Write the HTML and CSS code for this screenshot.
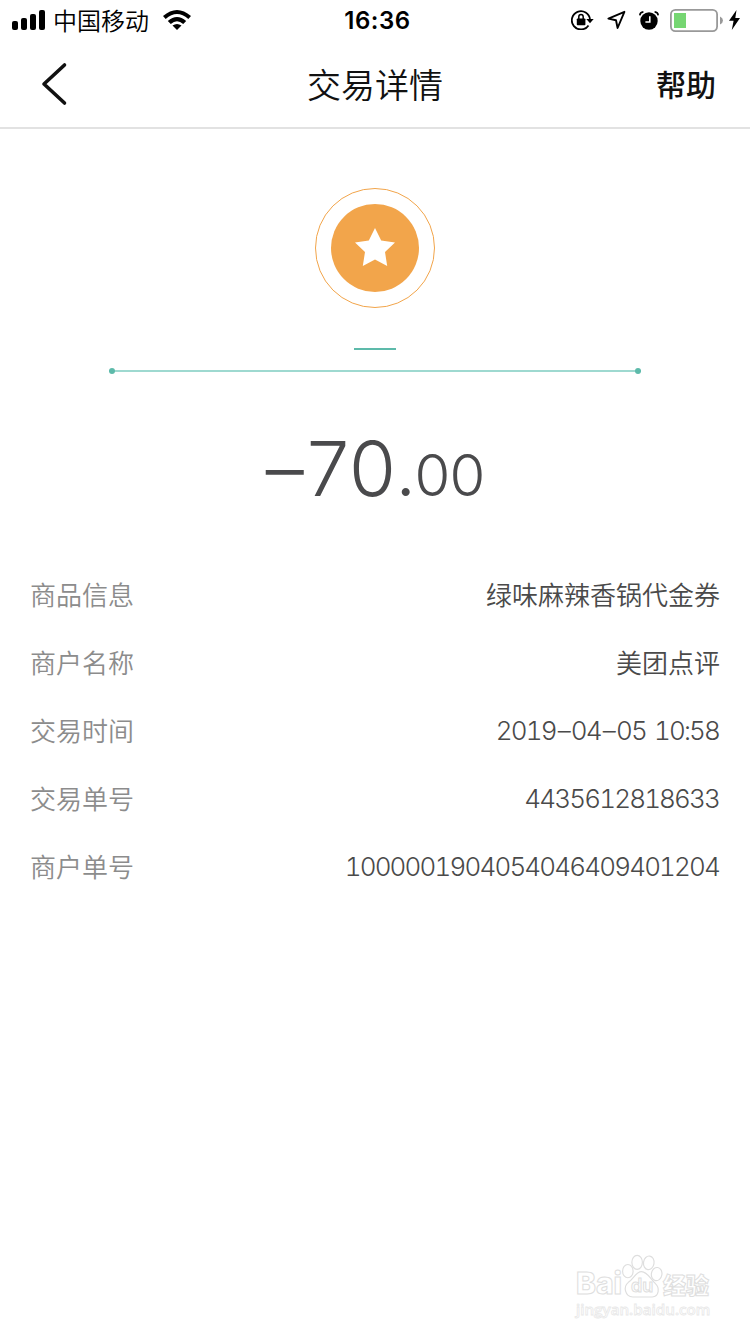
FILE: index.html
```html
<!DOCTYPE html>
<html lang="zh-CN">
  <head>
    <meta charset="utf-8" />
    <title>交易详情</title>
    <link rel="stylesheet" href="styles.css">
  </head>
  <body>
    <div class="status-bar">
      <div class="status-left">
        <svg class="signal" width="34" height="20" viewBox="0 0 34 20">
          <rect x="0" y="11" width="6" height="9" rx="2" />
          <rect x="9" y="8" width="6" height="12" rx="2" />
          <rect x="18" y="4" width="6" height="16" rx="2" />
          <rect x="27" y="0" width="6" height="20" rx="2" />
        </svg>
        <span class="carrier">中国移动</span>
        <svg class="wifi" width="28" height="20" viewBox="0 0 28 20">
          <path d="M0 6 Q14 -6 28 6 L25.3 9 Q14 -1 2.7 9 Z" />
          <path d="M4.8 11 Q14 3 23.2 11 L20.2 14 Q14 8.5 7.8 14 Z" />
          <path d="M9.5 15.6 Q14 12.2 18.5 15.6 L14 20 Z" />
        </svg>
      </div>
      <div class="time">16:36</div>
      <div class="status-right">
        <svg class="rotation-lock" width="23" height="20" viewBox="0 0 23 20">
          <path d="M17.5 15.4 A9.1 9.1 0 1 1 19 9.5" fill="none" stroke="#000" stroke-width="1.8" />
          <path d="M15.3 9 H22.7 L19 13.2 Z" />
          <rect x="5.8" y="8.4" width="8.6" height="6.8" rx="0.8" />
          <path d="M7.8 9 V6.8 A2.2 2.4 0 0 1 12.2 6.8 V9" fill="none" stroke="#000" stroke-width="1.5" />
        </svg>
        <svg class="location" width="19" height="20" viewBox="0 0 19 20">
          <path d="M17.4 1.8 L1.4 8.6 L9 10.2 L10.6 18 Z" fill="none" stroke="#000" stroke-width="1.9" stroke-linejoin="round" />
        </svg>
        <svg class="alarm" width="20" height="19" viewBox="0 0 20 19">
          <circle cx="10" cy="10" r="8.7" />
          <path d="M0.8 4.4 Q1 1.3 4.4 0.9 M19.2 4.4 Q19 1.3 15.6 0.9" fill="none" stroke="#000" stroke-width="1.6" />
          <path d="M10.8 5.2 V11 H6.4" fill="none" stroke="#fff" stroke-width="1.6" />
        </svg>
        <svg class="battery" width="53" height="23" viewBox="0 0 53 23">
          <rect x="0.9" y="0.9" width="46.2" height="21.2" rx="4.5" fill="none" stroke="#999" stroke-width="1.8" />
          <rect x="4" y="4" width="12" height="15" fill="#76d672" />
          <path d="M50 7.5 Q53 9 53 11.5 Q53 14 50 15.5 Z" fill="#999" />
        </svg>
        <svg class="bolt" width="11" height="20" viewBox="0 0 11 20">
          <path d="M7.5 0 L0 10.8 H4.6 L2.8 20 L11 8 H6.3 Z" />
        </svg>
      </div>
    </div>

    <div class="nav-bar">
      <svg class="back" width="28" height="44" viewBox="0 0 28 44">
        <path d="M24.5 3 L4 22 L24.5 41" fill="none" stroke="#111" stroke-width="3.6" stroke-linecap="round" stroke-linejoin="round" />
      </svg>
      <div class="title">交易详情</div>
      <div class="help">帮助</div>
    </div>

    <div class="summary">
      <div class="badge">
        <div class="badge-inner">
          <svg width="40" height="40" viewBox="0 0 40 40">
            <path d="M20 0 L26.2 12.5 L40 14.4 L30 24 L32.2 38 L20 31.4 L7.8 38 L10 24 L0 14.4 L13.8 12.5 Z" fill="#fff" />
          </svg>
        </div>
      </div>
      <div class="short-line"></div>
      <div class="long-line"></div>
      <div class="amount">
        <span class="minus">–</span><span class="yuan">70.</span><span class="cents">00</span>
      </div>
    </div>

    <div class="details">
      <div class="row">
        <span class="label">商品信息</span>
        <span class="value">绿味麻辣香锅代金券</span>
      </div>
      <div class="row">
        <span class="label">商户名称</span>
        <span class="value">美团点评</span>
      </div>
      <div class="row">
        <span class="label">交易时间</span>
        <span class="value number">2019<span class="dash">–</span>04<span class="dash">–</span>05 10:58</span>
      </div>
      <div class="row">
        <span class="label">交易单号</span>
        <span class="value number">4435612818633</span>
      </div>
      <div class="row">
        <span class="label">商户单号</span>
        <span class="value number">1000001904054046409401204</span>
      </div>
    </div>

    <div class="watermark">
      <div class="logo">
        <span class="logo-text">Bai</span>
        <div class="paw">
          <svg width="41" height="46" viewBox="0 0 42 46" fill="#fff" stroke="#dedede" stroke-width="1.2">
            <ellipse cx="6" cy="17" rx="5.4" ry="6.8" />
            <ellipse cx="15.5" cy="8" rx="5.4" ry="7.2" />
            <ellipse cx="27.5" cy="8.5" rx="5.4" ry="7" transform="rotate(8 27.5 8)" />
            <ellipse cx="35.5" cy="20" rx="5.4" ry="6.8" transform="rotate(10 35.5 20)" />
            <path d="M20 17.5 C14 17.5 12 25 6.5 28.5 C1 33 3 43 11 43.5 H31 C38 43 39 34 34 29.5 C29 25 26 17.5 20 17.5 Z" />
          </svg>
          <span class="du">du</span>
        </div>
        <span class="logo-text cn">经验</span>
      </div>
      <div class="site">jingyan.baidu.com</div>
    </div>
  </body>
</html>
```

FILE: styles.css
```css
body {
  margin: 0;
  width: 750px;
  height: 1334px;
  display: flex;
  flex-direction: column;
  overflow: hidden;
  background: #fff;
  color: #111;
  font-family: "Noto Sans CJK SC", sans-serif;
}
svg {
  display: block;
  flex: none;
}
.status-bar {
  display: grid;
  grid-template-columns: 1fr auto 1fr;
  align-items: center;
  height: 40px;
  padding: 0 10px 0 12px;
  color: #000;
}
.status-left,
.status-right {
  display: flex;
  align-items: center;
}
.status-right {
  justify-content: flex-end;
}
.carrier {
  margin: 0 14px 0 7px;
  font-size: 24px;
  line-height: 40px;
  font-weight: 350;
}
.time {
  font-family: Inter, sans-serif;
  font-size: 24px;
  font-weight: 600;
  letter-spacing: 0.5px;
  padding: 1px 0 0 3px;
}
.rotation-lock {
  margin-right: 13px;
}
.location {
  margin-right: 13px;
}
.alarm {
  margin-right: 11px;
}
.battery {
  margin-right: 6px;
}
.nav-bar {
  display: grid;
  grid-template-columns: 1fr auto 1fr;
  align-items: center;
  height: 87px;
  padding: 0 34px;
  border-bottom: 2px solid #e2e2e2;
}
.back {
  margin-left: 6px;
}
.title {
  font-size: 34px;
  line-height: 85px;
  padding-bottom: 1px;
  font-weight: 350;
}
.help {
  font-size: 30px;
  font-weight: 500;
  text-align: right;
  padding-bottom: 2px;
}
.summary {
  display: flex;
  flex-direction: column;
  align-items: center;
  padding-top: 59px;
}
.badge {
  box-sizing: border-box;
  display: flex;
  align-items: center;
  justify-content: center;
  width: 120px;
  height: 120px;
  border: 1px solid #f2a54b;
  border-radius: 50%;
}
.badge-inner {
  display: flex;
  align-items: center;
  justify-content: center;
  width: 88px;
  height: 88px;
  border-radius: 50%;
  background: #f2a54b;
}
.short-line {
  width: 42px;
  height: 2px;
  margin-top: 40px;
  background: #5dbaaa;
}
.long-line {
  display: flex;
  align-items: center;
  justify-content: space-between;
  width: 532px;
  height: 2px;
  margin-top: 20px;
  background: #9ed9d0;
}
.long-line::before,
.long-line::after {
  content: "";
  width: 6px;
  height: 6px;
  border-radius: 50%;
  background: #5dbaaa;
}
.amount {
  display: flex;
  align-items: baseline;
  margin-top: 46px;
  height: 100px;
  line-height: 100px;
  font-family: Inter, sans-serif;
  font-weight: 350;
  color: #4a4a4c;
}
.minus,
.yuan {
  font-size: 76px;
}
.minus {
  margin-right: 3px;
}
.yuan {
  letter-spacing: 1px;
}
.cents {
  margin-left: -3px;
  font-size: 58px;
  letter-spacing: -1px;
}
.details {
  padding: 42px 30px 0;
}
.row {
  display: flex;
  align-items: center;
  justify-content: space-between;
  height: 68px;
  font-size: 26px;
  line-height: 68px;
}
.label {
  color: #8c8c8c;
  font-weight: 350;
}
.value {
  color: #4a4a4a;
  font-weight: 350;
}
.number {
  padding: 2px 1px 0 0;
  font-family: Inter, sans-serif;
  font-feature-settings: "tnum";
  letter-spacing: -1.85px;
  word-spacing: 3px;
}
.dash {
  margin: 0 2px;
}
.watermark {
  margin: auto 38px 16px auto;
  width: 136px;
  color: #fff;
}
.logo {
  display: flex;
  align-items: flex-end;
  height: 46px;
}
.logo-text {
  font-family: Inter, sans-serif;
  font-size: 30px;
  line-height: 34px;
  font-weight: 800;
  -webkit-text-stroke: 1px #dedede;
}
.logo-text.cn {
  font-family: "Noto Sans CJK SC", sans-serif;
  font-size: 23px;
  line-height: 32px;
}
.paw {
  position: relative;
}
.du {
  position: absolute;
  left: 9px;
  top: 22px;
  font-family: Inter, sans-serif;
  font-size: 18px;
  line-height: 20px;
  font-weight: 600;
  -webkit-text-stroke: 1px #dedede;
}
.site {
  font-family: "Open Sans", sans-serif;
  font-size: 15.2px;
  line-height: 18px;
  font-weight: 600;
  -webkit-text-stroke: 0.8px #e8e8e8;
}
```
